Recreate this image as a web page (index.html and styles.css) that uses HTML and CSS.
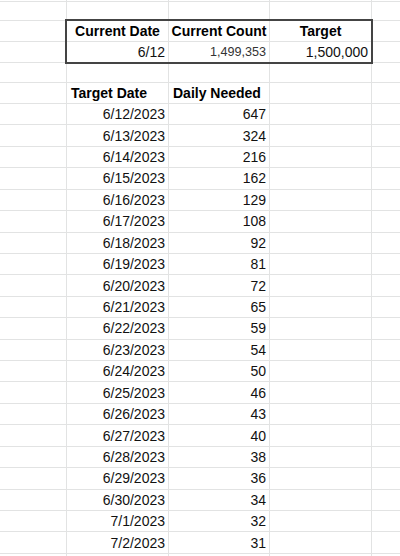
FILE: index.html
```html
<!DOCTYPE html>
<html>
<head>
<meta charset="utf-8">
<link rel="stylesheet" href="styles.css">
</head>
<body>
<div class="sheet">
  <div class="c"></div><div class="c"></div><div class="c"></div><div class="c"></div><div class="c"></div>
  <div class="c"></div><div class="c"></div><div class="c"></div><div class="c"></div><div class="c"></div>
  <div class="c"></div><div class="box"><div class="c b ctr">Current Date</div><div class="c b ctr">Current Count</div><div class="c b ctr">Target</div><div class="c r">6/12</div><div class="c r small">1,499,353</div><div class="c r">1,500,000</div></div><div class="c"></div>
  <div class="c"></div><div class="c"></div>
  <div class="c"></div><div class="c"></div><div class="c"></div><div class="c"></div><div class="c"></div>
  <div class="c"></div><div class="c b">Target Date</div><div class="c b">Daily Needed</div><div class="c"></div><div class="c"></div>
  <div class="c"></div><div class="c r">6/12/2023</div><div class="c r">647</div><div class="c"></div><div class="c"></div>
  <div class="c"></div><div class="c r">6/13/2023</div><div class="c r">324</div><div class="c"></div><div class="c"></div>
  <div class="c"></div><div class="c r">6/14/2023</div><div class="c r">216</div><div class="c"></div><div class="c"></div>
  <div class="c"></div><div class="c r">6/15/2023</div><div class="c r">162</div><div class="c"></div><div class="c"></div>
  <div class="c"></div><div class="c r">6/16/2023</div><div class="c r">129</div><div class="c"></div><div class="c"></div>
  <div class="c"></div><div class="c r">6/17/2023</div><div class="c r">108</div><div class="c"></div><div class="c"></div>
  <div class="c"></div><div class="c r">6/18/2023</div><div class="c r">92</div><div class="c"></div><div class="c"></div>
  <div class="c"></div><div class="c r">6/19/2023</div><div class="c r">81</div><div class="c"></div><div class="c"></div>
  <div class="c"></div><div class="c r">6/20/2023</div><div class="c r">72</div><div class="c"></div><div class="c"></div>
  <div class="c"></div><div class="c r">6/21/2023</div><div class="c r">65</div><div class="c"></div><div class="c"></div>
  <div class="c"></div><div class="c r">6/22/2023</div><div class="c r">59</div><div class="c"></div><div class="c"></div>
  <div class="c"></div><div class="c r">6/23/2023</div><div class="c r">54</div><div class="c"></div><div class="c"></div>
  <div class="c"></div><div class="c r">6/24/2023</div><div class="c r">50</div><div class="c"></div><div class="c"></div>
  <div class="c"></div><div class="c r">6/25/2023</div><div class="c r">46</div><div class="c"></div><div class="c"></div>
  <div class="c"></div><div class="c r">6/26/2023</div><div class="c r">43</div><div class="c"></div><div class="c"></div>
  <div class="c"></div><div class="c r">6/27/2023</div><div class="c r">40</div><div class="c"></div><div class="c"></div>
  <div class="c"></div><div class="c r">6/28/2023</div><div class="c r">38</div><div class="c"></div><div class="c"></div>
  <div class="c"></div><div class="c r">6/29/2023</div><div class="c r">36</div><div class="c"></div><div class="c"></div>
  <div class="c"></div><div class="c r">6/30/2023</div><div class="c r">34</div><div class="c"></div><div class="c"></div>
  <div class="c"></div><div class="c r">7/1/2023</div><div class="c r">32</div><div class="c"></div><div class="c"></div>
  <div class="c"></div><div class="c r">7/2/2023</div><div class="c r">31</div><div class="c"></div><div class="c"></div>
  <div class="c"></div><div class="c"></div><div class="c"></div><div class="c"></div><div class="c"></div>
</div>
</body>
</html>
```

FILE: styles.css
```css
html, body {
  margin: 0;
  padding: 0;
  background: #ffffff;
  overflow: hidden;
}

.sheet {
  display: grid;
  grid-template-columns: 66px 101px 100px 101px 1fr;
  grid-template-rows: 1px 18px 20px 20px 19px 20px repeat(21, 20.43px) 10px;
  gap: 1px;
  background: #e2e3e3;
  width: 400px;
  height: 556px;
  overflow: hidden;
  font-family: "Liberation Sans", Arial, sans-serif;
  font-size: 14px;
  color: #111;
}

.c {
  background: #ffffff;
  display: flex;
  align-items: center;
  padding: 0 3px 0 4px;
  white-space: nowrap;
  min-width: 0;
}

.b {
  font-weight: bold;
  color: #000;
}

.ctr {
  justify-content: center;
  padding: 0;
}

.r {
  justify-content: flex-end;
}

.small {
  font-size: 12.6px;
  color: #333;
}

.box {
  grid-row: 3 / 5;
  grid-column: 2 / 5;
  display: grid;
  grid-template-columns: subgrid;
  grid-template-rows: subgrid;
  background: #e2e3e3;
  outline: 2px solid #444;
  outline-offset: 0;
  position: relative;
  z-index: 1;
}
```
